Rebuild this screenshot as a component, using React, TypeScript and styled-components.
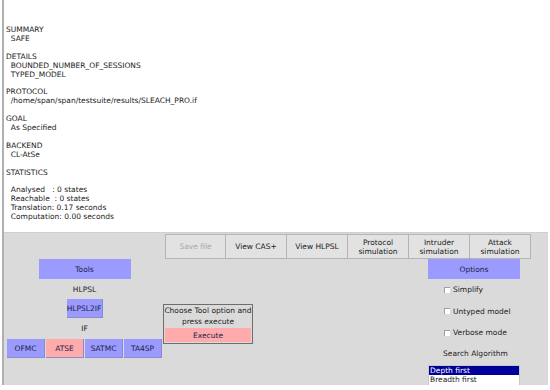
import React, { FC } from 'react';
import styled, { createGlobalStyle } from 'styled-components';

const GlobalStyle = createGlobalStyle`
	body {
		margin: 0;
		background: #ffffff;
		font-family: "DejaVu Sans", Verdana, sans-serif;
		color: #1a1a1a;
	}
`;

const Frame = styled.div`
	margin-left: 2px;
	width: 544px;
	border-left: 2px solid #b0b0b0;
	display: flex;
	flex-direction: column;
`;

const ResultPane = styled.pre`
	margin: 0;
	height: 206px;
	padding: 26px 0 0 2px;
	font-family: "DejaVu Sans", Verdana, sans-serif;
	font-size: 7.5px;
	line-height: 8.9px;
	color: #1a1a1a;
	background: #ffffff;
	white-space: pre;
`;

const ControlPane = styled.div`
	height: 151px;
	background: #dadada;
	border-top: 1px solid #cfcfcf;
	padding-top: 1px;
	display: flex;
	flex-direction: column;
	font-size: 7.5px;
`;

const ActionBar = styled.div`
	display: flex;
	margin-left: 161px;
`;

const ActionButton = styled.button<{ disabled?: boolean }>`
	width: 61px;
	height: 25px;
	margin: 0;
	padding: 0;
	border: 1px solid #b4b4b4;
	border-left: none;
	background: #e2e2e2;
	font-family: "DejaVu Sans", Verdana, sans-serif;
	font-size: 7.5px;
	line-height: 9px;
	color: ${(p) => (p.disabled ? '#a8a8a8' : '#1a1a1a')};

	&:first-child {
		border-left: 1px solid #b4b4b4;
	}
`;

const Body = styled.div`
	display: flex;
	align-items: flex-start;
`;

const ToolColumn = styled.div`
	width: 157px;
	margin-left: 2px;
	display: flex;
	flex-direction: column;
	align-items: center;
`;

const Block = styled.div<{ tone: 'blue' | 'pink'; w: number }>`
	width: ${(p) => p.w}px;
	height: 20px;
	display: flex;
	align-items: center;
	justify-content: center;
	background: ${(p) => (p.tone === 'blue' ? '#9a9aff' : '#ffabab')};
	color: #1c1c48;
	box-sizing: border-box;
`;

const ToolButton = styled(Block)`
	height: 19px;
	border-right: 1px solid #8a8ad0;
	border-bottom: 1px solid #8a8ad0;
`;

const Label = styled.div<{ h: number }>`
	height: ${(p) => p.h}px;
	display: flex;
	align-items: center;
	justify-content: center;
	color: #1a1a1a;
`;

const ToolRow = styled.div`
	display: flex;
	gap: 1px;
`;

const ExecuteBox = styled.div`
	width: 88px;
	margin-top: 45px;
	border: 1px solid #6e6e6e;
	background: #dadada;
	display: flex;
	flex-direction: column;
	align-items: center;
	padding-bottom: 1px;
`;

const Hint = styled.div`
	text-align: center;
	line-height: 10.5px;
	padding: 1px 0 1px;
	color: #1a1a1a;
`;

const ExecuteButton = styled.div`
	width: 86px;
	height: 14px;
	background: #ffabab;
	color: #1c1c48;
	display: flex;
	align-items: center;
	justify-content: center;
`;

const OptionColumn = styled.div`
	margin-left: auto;
	margin-right: 28px;
	width: 92px;
	display: flex;
	flex-direction: column;
`;

const OptionRow = styled.label`
	height: 21.5px;
	display: flex;
	align-items: center;
	padding-left: 16px;
	gap: 3px;
	color: #1a1a1a;
`;

const Box = styled.span`
	width: 5px;
	height: 5px;
	background: #ffffff;
	border-top: 1px solid #a0a0a0;
	border-left: 1px solid #a0a0a0;
`;

const SearchTitle = styled.div`
	height: 20px;
	display: flex;
	align-items: center;
	padding-left: 15px;
	color: #1a1a1a;
`;

const ListBox = styled.div`
	margin-top: 1px;
	background: #ffffff;
	border: 1px solid #c8c8c8;
	display: flex;
	flex-direction: column;
`;

const ListItem = styled.div<{ selected?: boolean }>`
	height: 9.5px;
	line-height: 9.5px;
	padding-left: 1px;
	background: ${(p) => (p.selected ? '#000099' : '#ffffff')};
	color: ${(p) => (p.selected ? '#ffffff' : '#1a1a1a')};
`;

const report = `SUMMARY
  SAFE

DETAILS
  BOUNDED_NUMBER_OF_SESSIONS
  TYPED_MODEL

PROTOCOL
  /home/span/span/testsuite/results/SLEACH_PRO.if

GOAL
  As Specified

BACKEND
  CL-AtSe

STATISTICS

  Analysed   : 0 states
  Reachable  : 0 states
  Translation: 0.17 seconds
  Computation: 0.00 seconds`;

const actions: { label: React.ReactNode; disabled?: boolean }[] = [
	{ label: 'Save file', disabled: true },
	{ label: 'View CAS+' },
	{ label: 'View HLPSL' },
	{ label: <>Protocol<br />simulation</> },
	{ label: <>Intruder<br />simulation</> },
	{ label: <>Attack<br />simulation</> },
];

const backends = ['OFMC', 'ATSE', 'SATMC', 'TA4SP'];
const options = ['Simplify', 'Untyped model', 'Verbose mode'];

const App: FC = () => {
	return (
		<>
			<GlobalStyle />
			<Frame>
				<ResultPane>{report}</ResultPane>
				<ControlPane>
					<ActionBar>
						{actions.map((a, i) => (
							<ActionButton key={i} disabled={a.disabled}>{a.label}</ActionButton>
						))}
					</ActionBar>
					<Body>
						<ToolColumn>
							<Block tone="blue" w={92}>Tools</Block>
							<Label h={20}>HLPSL</Label>
							<ToolButton tone="blue" w={36}>HLPSL2IF</ToolButton>
							<Label h={21}>IF</Label>
							<ToolRow>
								{backends.map((b) => (
									<ToolButton key={b} tone={b === 'ATSE' ? 'pink' : 'blue'} w={38}>{b}</ToolButton>
								))}
							</ToolRow>
						</ToolColumn>
						<ExecuteBox>
							<Hint>Choose Tool option and<br />press execute</Hint>
							<ExecuteButton>Execute</ExecuteButton>
						</ExecuteBox>
						<OptionColumn>
							<Block tone="blue" w={92}>Options</Block>
							{options.map((o) => (
								<OptionRow key={o}><Box />{o}</OptionRow>
							))}
							<SearchTitle>Search Algorithm</SearchTitle>
							<ListBox>
								<ListItem selected>Depth first</ListItem>
								<ListItem>Breadth first</ListItem>
							</ListBox>
						</OptionColumn>
					</Body>
				</ControlPane>
			</Frame>
		</>
	);
};

export default App;
